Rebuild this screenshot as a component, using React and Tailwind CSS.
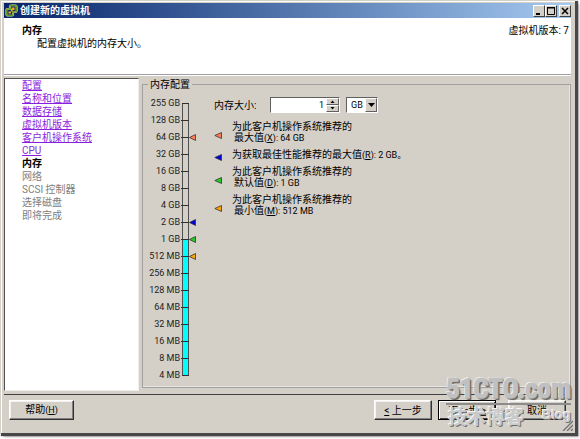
import React from 'react';

const steps = [
    { label: '配置', state: 'done' },
    { label: '名称和位置', state: 'done' },
    { label: '数据存储', state: 'done' },
    { label: '虚拟机版本', state: 'done' },
    { label: '客户机操作系统', state: 'done' },
    { label: 'CPU', state: 'done' },
    { label: '内存', state: 'current' },
    { label: '网络', state: 'todo' },
    { label: 'SCSI 控制器', state: 'todo' },
    { label: '选择磁盘', state: 'todo' },
    { label: '即将完成', state: 'todo' },
];

const sizes = ['255 GB', '128 GB', '64 GB', '32 GB', '16 GB', '8 GB', '4 GB', '2 GB', '1 GB', '512 MB', '256 MB', '128 MB', '64 MB', '32 MB', '16 MB', '8 MB', '4 MB'];

const markers = { '64 GB': '#ff7f50', '2 GB': '#0000e0', '1 GB': '#22cc22', '512 MB': '#ffa500' };

const hints = [
    { color: '#ff7f50', first: '为此客户机操作系统推荐的', name: '最大值', hotkey: 'X', value: '64 GB' },
    { color: '#0000e0', name: '为获取最佳性能推荐的最大值', hotkey: 'R', value: '2 GB。' },
    { color: '#22cc22', first: '为此客户机操作系统推荐的', name: '默认值', hotkey: 'D', value: '1 GB' },
    { color: '#ffa500', first: '为此客户机操作系统推荐的', name: '最小值', hotkey: 'M', value: '512 MB' },
];

const TitleButton = ({ label, children }) => (
    <button aria-label={label} className="w-3 h-3 bg-[#d4d0c8] border border-t-white border-l-white border-r-[#404040] border-b-[#404040] flex items-center justify-center">
        <svg width="10" height="10" viewBox="0 0 10 10" fill="none" stroke="#000" className="shrink-0">
            {children}
        </svg>
    </button>
);

const DialogButton = ({ children, wide, primary }) => (
    <button className={`h-5 bg-[#d4d0c8] border text-center ${wide ? 'w-[65px]' : 'w-[58px]'} ${primary ? 'border-black shadow-[inset_1px_1px_0_#fff,inset_-1px_-1px_0_#404040]' : 'border-t-white border-l-white border-r-[#303030] border-b-[#303030] shadow-[inset_-1px_-1px_0_#808080,inset_1px_1px_0_#f4f2ee]'}`}>
        {children}
    </button>
);

const Step = ({ label, state }) => {
    if (state === 'done') {
        return <a href="#" className="text-[#8a1fe0] underline">{label}</a>;
    }
    return <span className={state === 'current' ? 'font-bold text-black' : 'text-[#808080]'}>{label}</span>;
};

const MemoryScale = () => (
    <div className="flex pt-1">
        <div className="w-8 flex flex-col items-end text-[9px] text-[#202020]">
            {sizes.map((s) => (
                <div key={s} className="h-[17px] leading-[17px] whitespace-nowrap">{s}</div>
            ))}
        </div>
        {/* one tick for each label, filled up to 1 GB */}
        <svg width="16" height="289" viewBox="0 0 16 289" className="ml-px">
            <rect x="1.5" y="8.5" width="6" height="272" fill="#d4d0c8" stroke="#505050" />
            <rect x="2" y="145" width="5" height="135" fill="#00ffff" />
            {sizes.map((s, i) => (
                <path key={s} d={`M${i === 0 || i === 16 ? 1 : 0} ${8.5 + i * 17} H8`} stroke="#303030" />
            ))}
            {sizes.map((s, i) => markers[s] && (
                <path key={s} d={`M8.5 ${8.5 + i * 17} l6 -3 v6 z`} fill={markers[s]} stroke="#333" strokeWidth="0.8" />
            ))}
        </svg>
    </div>
);

const SizeField = () => (
    <div className="flex items-center h-4">
        <label htmlFor="size" className="w-14">内存大小:</label>
        <div className="w-[70px] h-4 flex bg-white border border-t-[#606060] border-l-[#606060] border-white">
            <input id="size" type="text" inputMode="numeric" defaultValue="1" className="flex-1 min-w-0 pr-0.5 text-[9px] text-right outline-none" />
            <div className="w-[13px] flex flex-col">
                <button aria-label="增加" className="flex-1 flex items-center justify-center bg-[#d4d0c8] border border-t-white border-l-white border-[#606060]">
                    <svg width="5" height="3" viewBox="0 0 5 3"><path d="M0.5 3 L2.5 0.5 L4.5 3 Z" /></svg>
                </button>
                <button aria-label="减少" className="flex-1 flex items-center justify-center bg-[#d4d0c8] border border-t-white border-l-white border-[#606060]">
                    <svg width="5" height="3" viewBox="0 0 5 3"><path d="M0.5 0 L2.5 2.5 L4.5 0 Z" /></svg>
                </button>
            </div>
        </div>
        <div className="relative ml-1.5 w-8 h-4">
            <select aria-label="单位" defaultValue="GB" className="appearance-none block w-full h-full pl-1 bg-white border border-t-[#606060] border-l-[#606060] border-white text-[9px] leading-[13px]">
                <option>GB</option>
                <option>MB</option>
            </select>
            <span className="absolute right-px top-px w-3 h-3.5 flex items-center justify-center bg-[#d4d0c8] border border-t-white border-l-white border-[#606060] pointer-events-none">
                <svg width="7" height="4" viewBox="0 0 7 4"><path d="M0 0 H7 L3.5 4 Z" /></svg>
            </span>
        </div>
    </div>
);

const Hint = ({ color, first, name, hotkey, value }) => (
    <div className="flex items-center">
        <svg width="8" height="7" viewBox="0 0 8 7" className="shrink-0 mt-[5px] mr-[10px]">
            <path d="M0.8 3.5 L7.5 0.5 V6.5 Z" fill={color} stroke="#333" strokeWidth="0.8" />
        </svg>
        <p className="leading-[11px] whitespace-nowrap">
            {first && <span className="block">{first}</span>}
            <span className={first ? 'pl-0.5' : ''}>{name}<span className="text-[9px]">(<u>{hotkey}</u>): {value}</span></span>
        </p>
    </div>
);

const Watermark = () => (
    <div className="absolute right-1 bottom-0.5 w-[125px] pointer-events-none font-bold text-[#c0c0c0]">
        <div className="text-[27px] leading-[27px] whitespace-nowrap [-webkit-text-stroke:1px_#c0c0c0] [text-shadow:-1px_-1px_0_#f8f8f8,1px_1px_0_#808080,2px_2px_1px_#606060] font-['Liberation_Sans_Narrow','Roboto_Condensed','Liberation_Sans',sans-serif]">51CTO.com</div>
        <div className="flex justify-between border-t-2 border-[#8c8c8c] text-[#cacaca] [text-shadow:-1px_-1px_0_#f4f4f4,1px_1px_0_#707070]">
            <span className="text-[19px] leading-[26px] pl-0.5">技术博客</span>
            <span className="text-[13px] leading-5 font-['Liberation_Sans',sans-serif]">Blog</span>
        </div>
    </div>
);

const App = () => {
    return (
        <div className="min-h-screen flex pr-[5px] pb-1.5 bg-white overflow-hidden">
            <div className="relative flex-1 flex flex-col px-1 pt-[3px] bg-[#d4d0c8] text-black text-[10px] leading-[13px] font-[Roboto,'Noto_Sans_CJK_SC',sans-serif] shadow-[inset_1px_1px_0_#d4d0c8,inset_2px_2px_0_#fff,2px_2px_1px_1px_#484848,4px_4px_2px_#b0b0b0]">
                <header className="h-[15px] shrink-0 flex items-center gap-0.5 pl-px bg-gradient-to-r from-[#0a246a] to-[#a6caf0] text-white font-bold">
                    <svg width="13" height="13" viewBox="0 0 13 13" fill="none">
                        <rect x="5" y="1.5" width="6.5" height="6.5" rx="1" stroke="#dfe8c8" strokeWidth="2.2" />
                        <rect x="1.5" y="5" width="6.5" height="6.5" rx="1" stroke="#dfe8c8" strokeWidth="2.2" />
                        <rect x="5" y="1.5" width="6.5" height="6.5" rx="1" stroke="#6a9a1c" strokeWidth="1.4" />
                        <rect x="1.5" y="5" width="6.5" height="6.5" rx="1" stroke="#6a9a1c" strokeWidth="1.4" />
                        <path d="M2.5 10.5 V6 H6 V2.5 H10.5 V7 H7 V10.5 Z" fill="#12306e" />
                        <path d="M3.5 9.5 V7.5 H6 V5 H6.5 V3.5 H9.5 V6 H7.5 V7.5 H6 V9.5 Z" fill="#f5a623" />
                    </svg>
                    <h1 className="flex-1">创建新的虚拟机</h1>
                    <div className="flex">
                        <TitleButton label="最小化"><path d="M2 8 H6" strokeWidth="2" /></TitleButton>
                        <TitleButton label="最大化"><path d="M1.5 2 H8.5 V8.5 H1.5 Z M1 1.5 H9" /></TitleButton>
                    </div>
                    <TitleButton label="关闭"><path d="M2 2 L8 8 M8 2 L2 8" strokeWidth="1.5" /></TitleButton>
                </header>

                <section className="h-[57px] shrink-0 flex justify-between bg-white border-b border-[#a0a0a4] pl-[18px] pr-0.5 pt-1.5">
                    <div>
                        <h2 className="font-bold">内存</h2>
                        <p className="pl-[15px]">配置虚拟机的内存大小。</p>
                    </div>
                    <span>虚拟机版本: 7</span>
                </section>

                <main className="flex-1 flex gap-[3px] border-t border-white pt-0.5 pb-[3px]">
                    <nav className="w-[135px] flex flex-col items-start bg-white border border-t-[#505050] border-l-[#505050] border-r-[#f0eeea] border-b-[#f0eeea] pl-[17px]">
                        {steps.map((s) => <Step key={s.label} {...s} />)}
                    </nav>
                    <fieldset className="flex-1 min-w-0 flex border border-[#a0a0a0] mb-[3px] px-[5px] shadow-[inset_-1px_-1px_0_#e8e6e2]">
                        <legend className="px-0.5">内存配置</legend>
                        <MemoryScale />
                        <div className="flex flex-col gap-2 pt-1.5 pl-[17px]">
                            <SizeField />
                            <div className="flex flex-col gap-[5px]">
                                {hints.map((h) => <Hint key={h.hotkey} {...h} />)}
                            </div>
                        </div>
                    </fieldset>
                </main>

                <footer className="h-[39px] shrink-0 flex items-start border-t border-[#404040] pt-[5px] px-[5px]">
                    <DialogButton wide>帮助<span className="text-[9px]">(<u>H</u>)</span></DialogButton>
                    <div className="ml-auto flex gap-1.5">
                        <DialogButton><u>&lt;</u> 上一步</DialogButton>
                        <DialogButton primary>下一步 <u>&gt;</u></DialogButton>
                    </div>
                    <div className="ml-3">
                        <DialogButton>取消</DialogButton>
                    </div>
                </footer>

                <svg width="11" height="11" viewBox="0 0 11 11" className="absolute right-0.5 bottom-0.5" stroke="#707070" strokeWidth="1.3">
                    <path d="M1 11 L11 1 M5 11 L11 5 M9 11 L11 9" />
                </svg>
                <Watermark />
            </div>
        </div>
    );
};

export default App;
